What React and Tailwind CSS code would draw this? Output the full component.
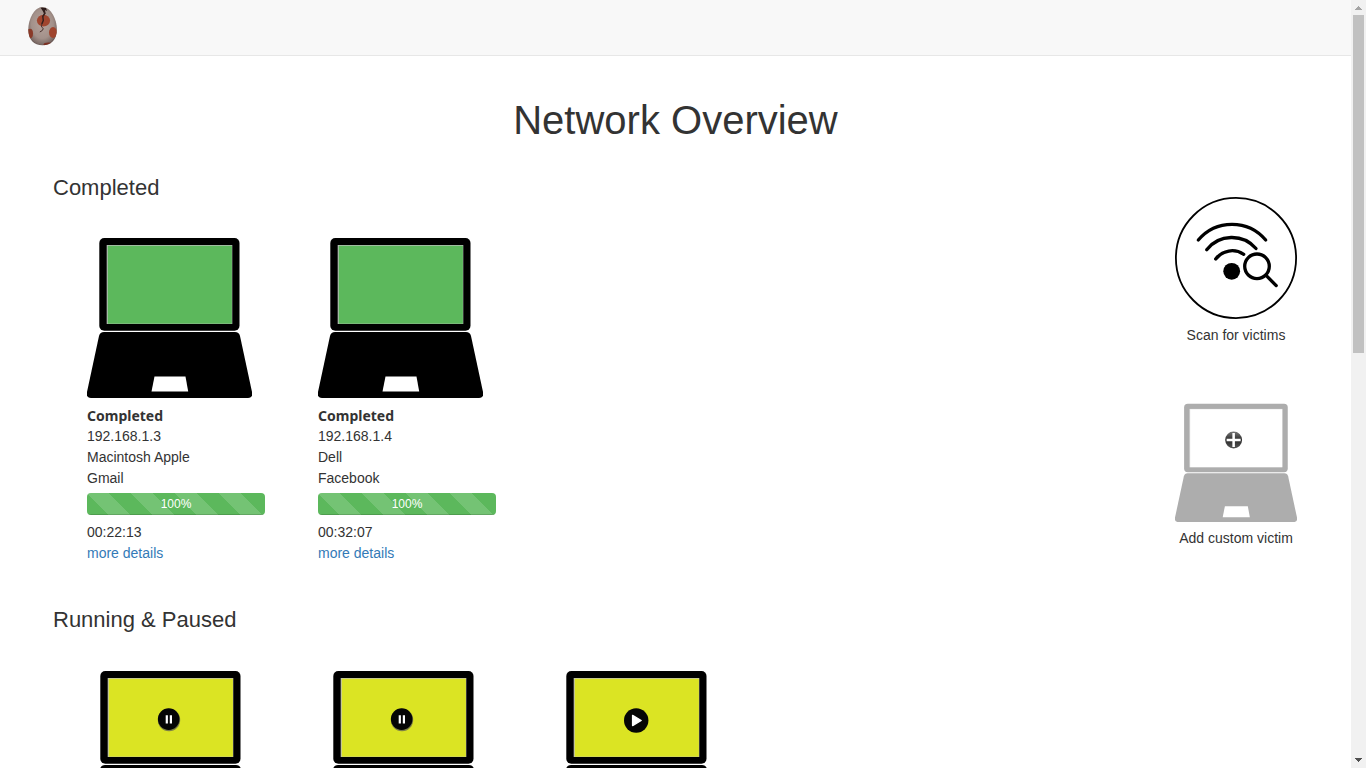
const completed = [
  { ip: '192.168.1.3', device: 'Macintosh Apple', service: 'Gmail', progress: 100, time: '00:22:13' },
  { ip: '192.168.1.4', device: 'Dell', service: 'Facebook', progress: 100, time: '00:32:07' },
];

const running = [
  { id: 1, state: 'paused' },
  { id: 2, state: 'paused' },
  { id: 3, state: 'running' },
];

function Laptop({ body = '#000', screen = '#5cb85c', className = '', children }) {
  return (
    <svg viewBox="0 0 165 161" className={`block ${className}`} aria-hidden="true">
      <rect x="12.3" y="1" width="140.2" height="92.7" rx="5" fill={body} />
      <rect x="19.7" y="8" width="125.6" height="79" fill="#fff" opacity="0.75" />
      <rect x="20.7" y="8.7" width="124.2" height="78" fill={screen} />
      <path
        d="M17 95h131q4 0 5 4l12 56q1 6-4 6H4q-5 0-4-6l12-56q1-4 5-4z"
        fill={body}
      />
      <path d="M67.5 139.5h31l2.7 15H64.5z" fill="#fff" />
      {children}
    </svg>
  );
}

function PauseMark() {
  return (
    <g>
      <circle cx="81" cy="50" r="11.2" fill="#555" opacity="0.7" />
      <circle cx="80.7" cy="49.1" r="10.8" fill="#050505" />
      <path d="M77.7 45.2h2.2v8.2h-2.2zM81.8 45.2H84v8.2h-2.2z" fill="#fff" />
    </g>
  );
}

function PlayMark() {
  return (
    <g>
      <circle cx="82.2" cy="50.5" r="12.2" fill="#050505" />
      <path
        d="M78.6 45.4v10.2l8.6-5.1z"
        fill="#fff"
        stroke="#fff"
        strokeWidth="1.4"
        strokeLinejoin="round"
      />
    </g>
  );
}

function ScanIcon() {
  return (
    <svg viewBox="0 0 122 122" className="block w-full" fill="none" stroke="#000" aria-hidden="true">
      <circle cx="61" cy="61" r="60.1" strokeWidth="1.8" />
      <g strokeWidth="3.3" strokeLinecap="round">
        <path d="M23.3 43a44 44 0 0 1 67.4 0" />
        <path d="M31.7 52.7a32 32 0 0 1 49.3-1.2" />
        <path d="M40.7 62a20.5 20.5 0 0 1 28-4.7" />
        <circle cx="82" cy="69.3" r="12.3" />
        <path d="M91.3 78.7l9.900 9.900" />
      </g>
      <circle cx="56.7" cy="74.3" r="8.4" fill="#000" stroke="none" />
    </svg>
  );
}

function Egg() {
  return (
    <svg viewBox="0 0 30 40" className="block h-10 w-[30px]" aria-hidden="true">
      <defs>
        <radialGradient id="shell" cx="0.48" cy="0.45" r="0.6">
          <stop offset="0" stopColor="#b5a29b" />
          <stop offset="0.6" stopColor="#a3918a" />
          <stop offset="0.85" stopColor="#7c6b66" />
          <stop offset="1" stopColor="#3a2b29" />
        </radialGradient>
        <clipPath id="egg">
          <path d="M14.500 1C6.500 1 .3 13 .3 23.500.3 33.500 6 39.300 14.500 39.300S28.900 33.500 28.900 23.500C28.900 13 22.500 1 14.500 1z" />
        </clipPath>
      </defs>
      <g clipPath="url(#egg)">
        <path d="M0 0h30v40H0z" fill="url(#shell)" />
        <ellipse cx="15.5" cy="14.6" rx="6.6" ry="5.9" fill="#a0452e" />
        <ellipse cx="25" cy="26.500" rx="4" ry="5.400" fill="#a0452e" />
        <ellipse cx="2" cy="27.500" rx="3" ry="4.800" fill="#8a3a28" />
        <ellipse cx="20.500" cy="38.600" rx="5" ry="2" fill="#7c3022" />
        <path d="M12.500 1.500l5.500.5 1 3-2-1 .5 4-1.500-1z" fill="#2b1a19" />
        <path
          d="M15.800 3l.9 4.500-1.900 3 .5 4-1.500 3.500"
          fill="none"
          stroke="#35201d"
          strokeWidth="1.5"
        />
        <path
          d="M13.800 17.500l-.3 3.500 1.800 1.500-1 2-2.500 1.500"
          fill="none"
          stroke="#4a3430"
          strokeWidth="1"
        />
      </g>
    </svg>
  );
}

function Progress({ value }) {
  return (
    <div className="mt-1 mb-[7px] h-[22px] overflow-hidden rounded bg-[#f5f5f5]">
      <div
        role="progressbar"
        aria-label="Progress"
        aria-valuenow={value}
        aria-valuemin={0}
        aria-valuemax={100}
        className="h-full bg-[#5cb85c] bg-[linear-gradient(45deg,rgba(255,255,255,0.15)_25%,transparent_25%,transparent_50%,rgba(255,255,255,0.15)_50%,rgba(255,255,255,0.15)_75%,transparent_75%,transparent)] bg-size-[44px_44px] text-center text-xs leading-[22px] text-white shadow-[inset_0_-1px_0_rgba(0,0,0,0.15)]"
        style={{ width: `${value}%` }}
      >
        {value}%
      </div>
    </div>
  );
}

function Action({ label, children }) {
  return (
    <button type="button" className="block w-[122px] cursor-pointer text-center whitespace-nowrap">
      {children}
      <span className="mt-1.5 block">{label}</span>
    </button>
  );
}

function SectionTitle({ children }) {
  return <h2 className="text-[22px] leading-[26px]">{children}</h2>;
}

export default function App() {
  return (
    <div className="flex h-screen overflow-hidden bg-white font-['Liberation_Sans',Arial,sans-serif] text-[14px] leading-[21px] text-[#333]">
      <div className="min-w-0 flex-1 overflow-hidden">
        <nav className="flex h-14 items-start border-b border-[#e7e7e7] bg-[#f8f8f8] pt-1.5 pl-7">
          <a href="#home" aria-label="Home">
            <Egg />
          </a>
        </nav>

        <main className="pt-[42px]">
          <h1 className="text-center text-[40px] leading-[44px]">Network Overview</h1>

          <div className="flex items-start justify-between pt-[33px] pr-[54px] pl-[53px]">
            <div>
              <section>
                <SectionTitle>Completed</SectionTitle>
                <div className="flex gap-[53px] pt-9 pl-[34px]">
                  {completed.map((v) => (
                    <article key={v.ip} className="w-[178px]">
                      <Laptop className="w-[165px]" />
                      <p className="mt-[7px] font-['Noto_Sans',sans-serif] font-bold">Completed</p>
                      <p>{v.ip}</p>
                      <p>{v.device}</p>
                      <p>{v.service}</p>
                      <Progress value={v.progress} />
                      <p>{v.time}</p>
                      <a href="#details" className="block text-[#337ab7]">
                        more details
                      </a>
                    </article>
                  ))}
                </div>
              </section>

              <section className="pt-[43px]">
                <SectionTitle>Running &amp; Paused</SectionTitle>
                <div className="flex gap-[55px] pt-[37px] pl-[35px]">
                  {running.map((v) => (
                    <article key={v.id} className="w-[178px]">
                      <Laptop screen="#dbe423" className="w-[165px]">
                        {v.state === 'paused' ? <PauseMark /> : <PlayMark />}
                      </Laptop>
                    </article>
                  ))}
                </div>
              </section>
            </div>

            <aside className="flex flex-col gap-[57px] pt-[22px]">
              <Action label="Scan for victims">
                <ScanIcon />
              </Action>
              <Action label="Add custom victim">
                <Laptop body="#adadad" screen="#fff" className="w-full">
                  <defs>
                    <linearGradient id="plus" x1="0" y1="0" x2="0" y2="1">
                      <stop offset="0" stopColor="#777" />
                      <stop offset="0.5" stopColor="#2b2b2b" />
                      <stop offset="1" stopColor="#555" />
                    </linearGradient>
                  </defs>
                  <circle cx="79.3" cy="50" r="11.4" fill="url(#plus)" />
                  <path d="M79.300 40.500v19M69.800 50h19" stroke="#fff" strokeWidth="3.4" />
                </Laptop>
              </Action>
            </aside>
          </div>
        </main>
      </div>

      <div className="flex w-[15px] shrink-0 flex-col items-center bg-[#f1f1f1] py-1.5" aria-hidden="true">
        <svg viewBox="0 0 7 4" className="h-1 w-[7px] shrink-0" shapeRendering="crispEdges">
          <path d="M3 0h1v1h1v1h1v1h1v1H0V3h1V2h1V1h1z" fill="#a3a3a3" />
        </svg>
        <div className="mt-[5px] h-[44.7%] w-[11px] bg-[#c1c1c1]" />
        <svg viewBox="0 0 7 4" className="mt-auto h-1 w-[7px] shrink-0" shapeRendering="crispEdges">
          <path d="M0 0h7v1H6v1H5v1H4v1H3V3H2V2H1V1H0z" fill="#505050" />
        </svg>
      </div>
    </div>
  );
}
